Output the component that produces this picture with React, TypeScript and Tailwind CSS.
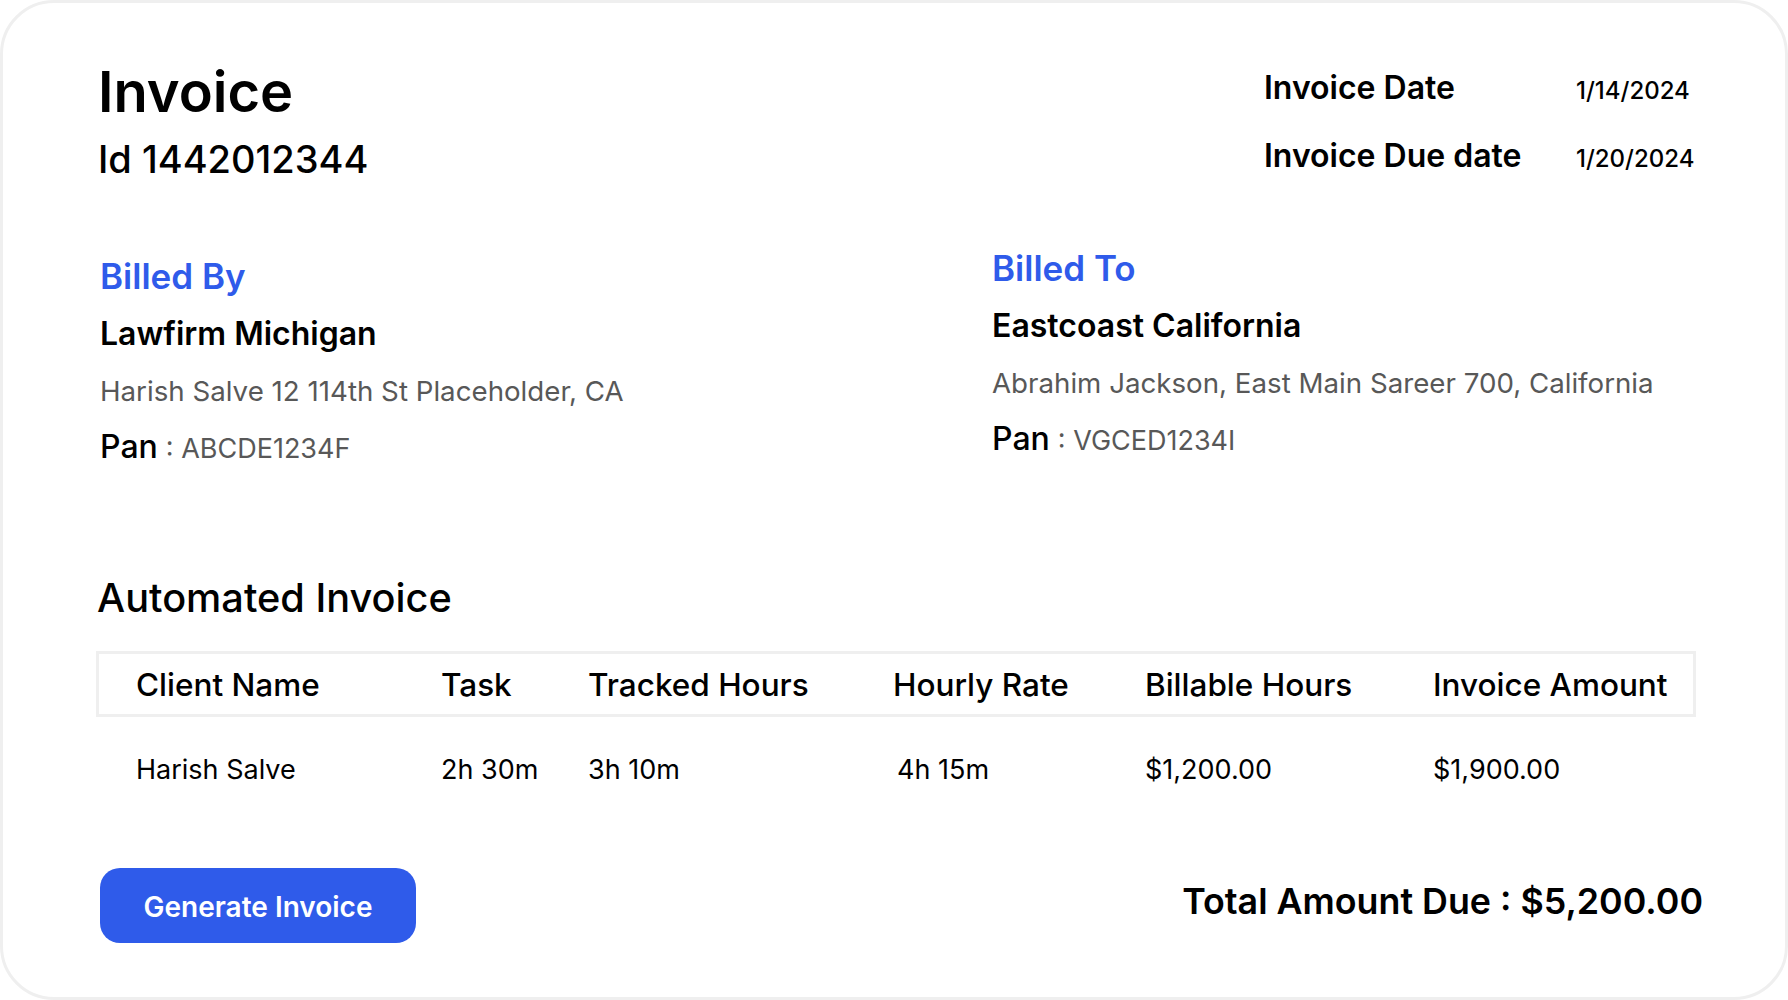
import React from 'react';

const rows = [
  { client: 'Harish Salve', task: '2h 30m', tracked: '3h 10m', rate: '4h 15m', billable: '$1,200.00', amount: '$1,900.00' },
];

const Party: React.FC<{ title: string; name: string; address: string; pan: string; offset: string }> = ({
  title,
  name,
  address,
  pan,
  offset,
}) => (
  <div className={`flex flex-col ${offset}`}>
    <h2 className="text-[35px] leading-none font-semibold text-[#2f5bea]">{title}</h2>
    <p className="mt-[24px] text-[32px] leading-none font-semibold text-black">{name}</p>
    <p className="mt-[28px] text-[27.7px] leading-none text-[#585858]">{address}</p>
    <p className="mt-[25px] flex items-baseline leading-none">
      <span className="text-[32px] font-medium text-black">Pan</span>
      <span className="ml-2 text-[27px] text-[#585858]">: {pan}</span>
    </p>
  </div>
);

export default function App() {
  return (
    <div className="w-[1788px] h-[1000px] bg-white font-['Inter',sans-serif] text-black">
      <div className="h-full rounded-[54px] border-[3px] border-[#efefef] pl-[95px] pr-[82px]">
        {/* Header */}
        <div className="flex pt-[61px]">
          <div className="w-[1166px] flex flex-col">
            <h1 className="text-[56px] leading-none font-semibold">Invoice</h1>
            <p className="mt-[20px] text-[38px] leading-none font-medium">Id 1442012344</p>
          </div>
          <div className="flex flex-col pt-[8px] gap-[36px]">
            <div className="flex items-baseline leading-none">
              <span className="w-[312px] text-[32px] font-semibold">Invoice Date</span>
              <span className="text-[24px] font-medium">1/14/2024</span>
            </div>
            <div className="flex items-baseline leading-none">
              <span className="w-[312px] text-[32px] font-semibold">Invoice Due date</span>
              <span className="text-[24px] font-medium">1/20/2024</span>
            </div>
          </div>
        </div>

        {/* Billed by / to */}
        <div className="mt-[73px] ml-[2px] flex">
          <div className="w-[892px]">
            <Party
              title="Billed By"
              name="Lawfirm Michigan"
              address="Harish Salve 12 114th St Placeholder, CA"
              pan="ABCDE1234F"
              offset="pt-[8px]"
            />
          </div>
          <Party
            title="Billed To"
            name="Eastcoast California"
            address="Abrahim Jackson, East Main Sareer 700, California"
            pan="VGCED1234I"
            offset=""
          />
        </div>

        {/* Table */}
        <h3 className="mt-[116px] -ml-px text-[39.7px] leading-none font-medium">Automated Invoice</h3>
        <div className="mt-[33px] -ml-[2px] w-[1600px]">
          <div className="h-[66px] border-[3px] border-[#efefef] pl-[37px] grid grid-cols-[305px_147px_305px_252px_288px_1fr] items-center text-[31.5px] leading-none font-medium">
            <span>Client Name</span>
            <span>Task</span>
            <span>Tracked Hours</span>
            <span>Hourly Rate</span>
            <span>Billable Hours</span>
            <span>Invoice Amount</span>
          </div>
          {rows.map((r) => (
            <div
              key={r.client}
              className="mt-[39px] pl-[40px] grid grid-cols-[305px_147px_305px_252px_288px_1fr] text-[27px] leading-none"
            >
              <span>{r.client}</span>
              <span>{r.task}</span>
              <span>{r.tracked}</span>
              <span className="ml-1">{r.rate}</span>
              <span>{r.billable}</span>
              <span>{r.amount}</span>
            </div>
          ))}
        </div>

        {/* Footer */}
        <div className="mt-[85px] ml-[2px] flex justify-between items-start">
          <button className="w-[316px] h-[75px] rounded-[20px] bg-[#2f5bea] pt-[2px] text-white text-[28px] leading-none font-semibold">
            Generate Invoice
          </button>
          <p className="mt-[16px] text-[35.8px] leading-none font-semibold">Total Amount Due : $5,200.00</p>
        </div>
      </div>
    </div>
  );
}
